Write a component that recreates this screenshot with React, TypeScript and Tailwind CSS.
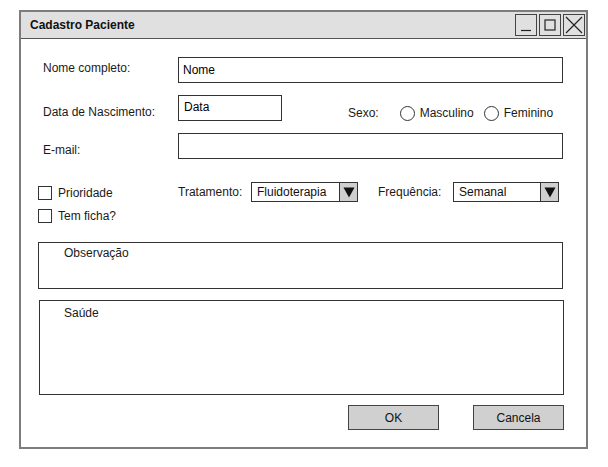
import type { ReactNode } from "react";

const font = { fontFamily: '"Liberation Sans", Arial, sans-serif' };

function Label({ children, className = "" }: { children: ReactNode; className?: string }) {
  return <span className={`text-[12px] leading-4 text-[#1a1a1a] ${className}`}>{children}</span>;
}

function Checkbox({ label }: { label: string }) {
  return (
    <div className="flex h-[14px] items-center gap-[6px]">
      <span className="h-[14px] w-[14px] border border-[#333] bg-white" />
      <Label>{label}</Label>
    </div>
  );
}

function Radio({ label }: { label: string }) {
  return (
    <div className="flex items-center gap-[5px]">
      <span className="h-[15px] w-[15px] rounded-full border border-[#333] bg-white" />
      <Label>{label}</Label>
    </div>
  );
}

function Select({ value, className = "" }: { value: string; className?: string }) {
  return (
    <div className={`flex h-[20px] border border-[#333] bg-white ${className}`}>
      <span className="flex-1 pl-[5px] text-[12px] leading-[18px] text-[#111]">{value}</span>
      <span className="grid w-[18px] place-items-center border-l border-[#333] bg-[#cfcfcf]">
        <svg viewBox="0 0 12 12" className="h-[12px] w-[12px]">
          <path d="M0.5 1.5h11L6 11.5z" fill="#111" />
        </svg>
      </span>
    </div>
  );
}

function WinButton({ children }: { children: ReactNode }) {
  return (
    <span className="grid h-[22px] w-[22px] place-items-center border border-[#444]">
      <svg viewBox="0 0 20 20" fill="none" stroke="#222" strokeWidth="1.2" className="h-[20px] w-[20px]">
        {children}
      </svg>
    </span>
  );
}

export default function App() {
  return (
    <div className="h-[467px] w-[608px] bg-white pl-[19px] pt-[10px]" style={font}>
      <div className="flex h-[439px] w-[569px] flex-col border-2 border-[#7c7c7c] bg-white">
        {/* title bar */}
        <div className="flex h-[27px] items-center justify-between border-b border-[#555] bg-[#e0e0e0] pl-[9px] pr-[1px]">
          <span className="text-[12px] font-bold text-[#111]">Cadastro Paciente</span>
          <div className="flex gap-[2px]">
            <WinButton>
              <path d="M5 15.5h10" />
            </WinButton>
            <WinButton>
              <rect x="5" y="5" width="10" height="10" />
            </WinButton>
            <WinButton>
              <path d="M2 2l16 16M18 2L2 18" />
            </WinButton>
          </div>
        </div>

        <div className="flex flex-1 flex-col pl-[17px]">
          {/* nome */}
          <div className="mt-[18px] flex items-start">
            <Label className="ml-[5px] mt-[3px] w-[135px]">Nome completo:</Label>
            <div className="h-[26px] w-[385px] border border-[#333] pl-[4px] text-[12px] leading-[24px]">Nome</div>
          </div>

          {/* nascimento + sexo */}
          <div className="mt-[12px] flex items-start">
            <Label className="ml-[5px] mt-[9px] w-[135px]">Data de Nascimento:</Label>
            <div className="h-[26px] w-[104px] border border-[#333] pl-[5px] pt-[3px] text-[12px] leading-4">Data</div>
            <Label className="ml-[66px] mt-[10px]">Sexo:</Label>
            <div className="ml-[21px] mt-[10px] flex gap-[10px]">
              <Radio label="Masculino" />
              <Radio label="Feminino" />
            </div>
          </div>

          {/* email */}
          <div className="mt-[12px] flex items-start">
            <Label className="ml-[5px] mt-[9px] w-[135px]">E-mail:</Label>
            <div className="h-[26px] w-[385px] border border-[#333]" />
          </div>

          {/* flags */}
          <div className="mt-[26px] flex items-start">
            <div className="flex w-[140px] flex-col gap-[9px] pt-[1px]">
              <Checkbox label="Prioridade" />
              <Checkbox label="Tem ficha?" />
            </div>
            <div className="-mt-[3px] flex items-center">
              <Label className="w-[73px]">Tratamento:</Label>
              <Select value="Fluidoterapia" className="w-[107px]" />
              <Label className="ml-[20px] w-[75px]">Frequência:</Label>
              <Select value="Semanal" className="w-[106px]" />
            </div>
          </div>

          {/* observação */}
          <div className="mt-[19px] h-[47px] w-[525px] border border-[#333] pl-[25px] pt-[2px] text-[12px] leading-4">
            <Label>Observação</Label>
          </div>

          {/* saúde */}
          <div className="ml-[1px] mt-[11px] h-[95px] w-[525px] border border-[#333] pl-[24px] pt-[4px] text-[12px] leading-4">
            <Label>Saúde</Label>
          </div>

          {/* actions */}
          <div className="ml-[310px] mt-[10px] flex gap-[34px]">
            <button type="button" className="h-[25px] w-[91px] border border-[#444] bg-[#d0d0d0] text-[12px] text-[#111]">
              OK
            </button>
            <button type="button" className="h-[25px] w-[91px] border border-[#444] bg-[#d0d0d0] text-[12px] text-[#111]">
              Cancela
            </button>
          </div>
        </div>
      </div>
    </div>
  );
}
